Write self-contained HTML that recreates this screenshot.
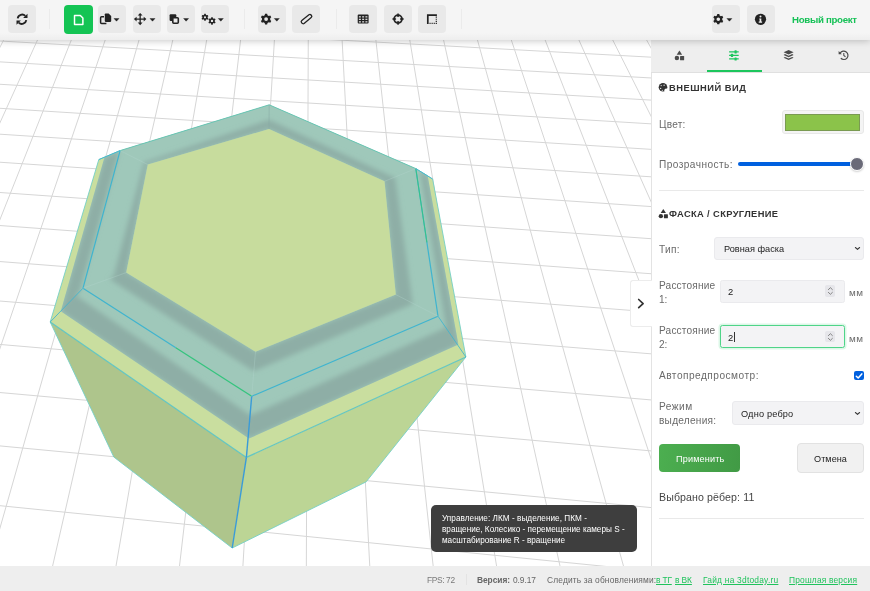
<!DOCTYPE html>
<html lang="ru"><head><meta charset="utf-8"><title>3D</title>
<style>
*{box-sizing:border-box;margin:0;padding:0}
html,body{width:870px;height:591px;overflow:hidden;background:#fff;font-family:"Liberation Sans",sans-serif;}
.abs{position:absolute}
#scene{position:absolute;left:0;top:0;width:870px;height:591px}
#hdr{position:absolute;left:0;top:0;width:870px;height:39.6px;background:linear-gradient(#f5f5f5 0,#f5f5f5 33px,#eeeeee 39.6px);box-shadow:0 1px 7px rgba(0,0,0,.22);z-index:5}
.tb{position:absolute;top:5px;width:28px;height:28px;border-radius:4px;background:#e9e9e9}
.tb.g{background:#14c454;top:4.5px;height:29px;width:28.6px}
.sep{position:absolute;top:9px;width:1px;height:20px;background:#ebebeb}
.tb svg{position:absolute;left:0;top:0;width:28px;height:28px}
.t{position:absolute;white-space:nowrap;line-height:1;will-change:transform}
#panel{position:absolute;left:651px;top:39px;width:219px;height:527px;background:#fff;border-left:1px solid #e3e3e3;z-index:3}
#tabs{position:absolute;left:651px;top:39px;width:219px;height:34px;background:#eeeeee;border-bottom:1px solid #e0e0e0;z-index:4}
#ftr{position:absolute;left:0;top:566px;width:870px;height:25px;background:#eeeeee;z-index:6}
.lbl{color:#6a6a6a;font-size:10.1px}
.hr{position:absolute;left:659px;width:205px;height:1px;background:#e9e9e9;z-index:4}
.inp{position:absolute;background:#f3f3f5;border:1px solid #eaeaed;border-radius:2.5px;z-index:4}
.z4{z-index:4}
.lnk{color:#1fc35c;text-decoration:underline}
#t_proj{letter-spacing:-0.306px}#t_tt1{letter-spacing:0.041px}#t_tt2{letter-spacing:0.001px}#t_tt3{letter-spacing:-0.023px}#t_h1{letter-spacing:0.513px}#t_cvet{letter-spacing:0.236px}#t_prozr{letter-spacing:0.447px}#t_h2{letter-spacing:0.375px}#t_tip{letter-spacing:0.340px}#t_sel1{letter-spacing:0.014px}#t_r1{letter-spacing:0.187px}#t_mm1{letter-spacing:0.608px}#t_r2{letter-spacing:0.187px}#t_mm2{letter-spacing:0.608px}#t_auto{letter-spacing:0.501px}#t_rezh{letter-spacing:0.495px}#t_vyd{letter-spacing:0.262px}#t_sel2{letter-spacing:0.176px}#t_apply{letter-spacing:0.167px}#t_cancel{letter-spacing:0.060px}#t_sel{letter-spacing:0.104px}#t_fps{letter-spacing:-0.367px}#t_ver{letter-spacing:-0.045px}#t_vnum{letter-spacing:-0.083px}#t_sled{letter-spacing:0.160px}#t_tg{letter-spacing:-0.159px}#t_vk{letter-spacing:-0.088px}#t_guide{letter-spacing:0.234px}#t_old{letter-spacing:0.190px}#t_tip{margin-top:1px}#t_r1{margin-top:1px}#t_n1{margin-top:1px}#t_mm2{margin-top:1px}#t_h1{margin-top:1px}#t_h2{margin-top:1px}#t_tt2{margin-top:1px}#t_tt3{margin-top:1px}</style></head><body>
<svg id="scene" viewBox="0 0 870 591">
<rect width="870" height="591" fill="#fff"/>
<g stroke="#d6d6d6" stroke-width="1" fill="none"><line x1="-290.9" y1="-29.0" x2="-936.5" y2="542.8"/><line x1="-262.5" y1="-27.6" x2="-881.1" y2="549.1"/><line x1="-233.9" y1="-26.1" x2="-825.0" y2="555.5"/><line x1="-205.2" y1="-24.6" x2="-768.3" y2="561.9"/><line x1="-176.3" y1="-23.1" x2="-711.0" y2="568.5"/><line x1="-147.3" y1="-21.6" x2="-653.0" y2="575.1"/><line x1="-118.1" y1="-20.1" x2="-594.3" y2="581.7"/><line x1="-88.7" y1="-18.6" x2="-534.9" y2="588.5"/><line x1="-59.2" y1="-17.1" x2="-474.9" y2="595.3"/><line x1="-29.5" y1="-15.6" x2="-414.1" y2="602.2"/><line x1="0.3" y1="-14.0" x2="-352.5" y2="609.2"/><line x1="30.4" y1="-12.5" x2="-290.3" y2="616.3"/><line x1="60.6" y1="-10.9" x2="-227.3" y2="623.5"/><line x1="90.9" y1="-9.3" x2="-163.5" y2="630.8"/><line x1="121.5" y1="-7.8" x2="-98.9" y2="638.1"/><line x1="152.2" y1="-6.2" x2="-33.5" y2="645.5"/><line x1="183.0" y1="-4.6" x2="32.7" y2="653.1"/><line x1="214.1" y1="-3.0" x2="99.7" y2="660.7"/><line x1="245.4" y1="-1.4" x2="167.6" y2="668.4"/><line x1="276.8" y1="0.2" x2="236.3" y2="676.2"/><line x1="308.4" y1="1.9" x2="305.9" y2="684.1"/><line x1="340.2" y1="3.5" x2="376.4" y2="692.2"/><line x1="372.1" y1="5.2" x2="447.8" y2="700.3"/><line x1="404.3" y1="6.8" x2="520.1" y2="708.5"/><line x1="436.6" y1="8.5" x2="593.4" y2="716.9"/><line x1="469.2" y1="10.2" x2="667.7" y2="725.3"/><line x1="501.9" y1="11.8" x2="742.9" y2="733.9"/><line x1="534.8" y1="13.5" x2="819.2" y2="742.5"/><line x1="567.9" y1="15.3" x2="896.4" y2="751.3"/><line x1="601.2" y1="17.0" x2="974.7" y2="760.2"/><line x1="634.7" y1="18.7" x2="1054.1" y2="769.3"/><line x1="668.4" y1="20.4" x2="1134.6" y2="778.4"/><line x1="702.3" y1="22.2" x2="1216.2" y2="787.7"/><line x1="736.5" y1="23.9" x2="1298.9" y2="797.1"/><line x1="770.8" y1="25.7" x2="1382.8" y2="806.6"/><line x1="805.3" y1="27.5" x2="1467.8" y2="816.3"/><line x1="840.0" y1="29.3" x2="1554.1" y2="826.1"/><line x1="875.0" y1="31.1" x2="1641.6" y2="836.1"/><line x1="910.1" y1="32.9" x2="1730.4" y2="846.2"/><line x1="945.5" y1="34.7" x2="1820.4" y2="856.4"/><line x1="981.1" y1="36.6" x2="1911.8" y2="866.8"/><line x1="1016.9" y1="38.4" x2="2004.5" y2="877.4"/><line x1="1052.9" y1="40.3" x2="2098.6" y2="888.1"/><line x1="1089.2" y1="42.1" x2="2194.1" y2="898.9"/><line x1="-366.6" y1="-16.3" x2="1229.5" y2="68.6"/><line x1="-387.2" y1="0.2" x2="1261.9" y2="90.7"/><line x1="-409.0" y1="17.8" x2="1296.6" y2="114.6"/><line x1="-432.2" y1="36.5" x2="1333.9" y2="140.2"/><line x1="-457.0" y1="56.5" x2="1374.2" y2="167.8"/><line x1="-483.5" y1="77.8" x2="1417.8" y2="197.7"/><line x1="-511.9" y1="100.7" x2="1465.2" y2="230.1"/><line x1="-542.4" y1="125.3" x2="1516.7" y2="265.5"/><line x1="-575.3" y1="151.7" x2="1573.1" y2="304.1"/><line x1="-610.8" y1="180.3" x2="1635.0" y2="346.6"/><line x1="-649.2" y1="211.3" x2="1703.2" y2="393.4"/><line x1="-691.0" y1="245.0" x2="1778.9" y2="445.3"/><line x1="-736.6" y1="281.7" x2="1863.3" y2="503.2"/><line x1="-786.6" y1="322.0" x2="1958.0" y2="568.1"/><line x1="-841.6" y1="366.2" x2="2065.0" y2="641.5"/><line x1="-902.3" y1="415.2" x2="2186.8" y2="725.0"/><line x1="-969.9" y1="469.6" x2="2326.8" y2="821.0"/><line x1="-1045.4" y1="530.4" x2="2489.4" y2="932.5"/></g>

<defs>
<clipPath id="ring"><path clip-rule="evenodd" d="M269.2,104.8 L415.8,168.6 L427.6,175.6 L458.4,344.6 L248.9,438.6 L60.8,311.2 L104.5,157.2 L120.1,150.6Z M269.0,129.0 L384.5,181.3 L395.8,294.6 L255.5,351.7 L126.2,272.6 L147.8,164.6Z"/></clipPath>
<filter id="bl" x="-5%" y="-5%" width="110%" height="110%"><feGaussianBlur stdDeviation="2.4"/></filter>
</defs>
<!-- walls -->
<polygon fill="#aec58c" points="50.2,322.0 246.4,457.4 232.2,548.0 113.8,457.0"/>
<polygon fill="#bcd595" points="246.4,457.4 465.9,357.0 366.2,481.8 232.2,548.0"/>
<!-- outer band -->
<polygon fill="#c9de9f" points="269.2,104.8 415.8,168.6 432.6,179.0 465.9,357.0 246.4,457.4 50.2,322.0 98.8,159.6 120.1,150.6"/>
<polygon fill="#9fc8ba" points="269.2,104.8 415.8,168.6 427.6,175.6 458.4,344.6 248.9,438.6 60.8,311.2 104.5,157.2 120.1,150.6"/>
<g clip-path="url(#ring)"><g fill="#8eaea6" filter="url(#bl)"><polygon points="147.8,164.6 269.0,129.0 269.1,119.8 143.4,162.4"/><polygon points="269.0,129.0 384.5,181.3 393.9,177.5 269.1,119.8"/><polygon points="384.5,181.3 395.8,294.6 412.7,303.2 395.1,177.0"/><polygon points="419.9,171.0 446.2,327.6 458.4,344.6 427.6,175.6"/><polygon points="395.8,294.6 255.5,351.7 253.8,371.3 413.5,303.7"/><polygon points="446.2,327.6 250.4,415.3 248.9,438.6 458.4,344.6"/><polygon points="255.5,351.7 126.2,272.6 108.9,278.8 253.8,371.3"/><polygon points="250.4,415.3 75.9,295.6 60.8,311.2 248.9,438.6"/><polygon points="126.2,272.6 147.8,164.6 143.9,162.6 113.2,277.3"/><polygon points="79.7,291.6 119.3,150.9 104.5,157.2 60.8,311.2"/></g></g>
<polygon fill="#c7dc9d" points="269.0,129.0 384.5,181.3 395.8,294.6 255.5,351.7 126.2,272.6 147.8,164.6"/>
<line x1="120.1" y1="150.6" x2="269.2" y2="104.8" stroke="#5fc3b4" stroke-width="1" stroke-opacity="0.9"/><line x1="269.2" y1="104.8" x2="415.8" y2="168.6" stroke="#5fc3b4" stroke-width="1" stroke-opacity="0.9"/><line x1="98.8" y1="159.6" x2="120.1" y2="150.6" stroke="#74cfc6" stroke-width="1" stroke-opacity="0.9"/><line x1="432.6" y1="179.0" x2="415.8" y2="168.6" stroke="#74cfc6" stroke-width="1" stroke-opacity="0.9"/><line x1="432.6" y1="179.0" x2="465.9" y2="357.0" stroke="#74cfc6" stroke-width="1" stroke-opacity="0.9"/><line x1="98.8" y1="159.6" x2="50.2" y2="322.0" stroke="#74cfc6" stroke-width="1" stroke-opacity="0.9"/><line x1="50.2" y1="322.0" x2="113.8" y2="457.0" stroke="#74cfc6" stroke-width="1" stroke-opacity="0.9"/><line x1="113.8" y1="457.0" x2="232.2" y2="548.0" stroke="#74cfc6" stroke-width="1" stroke-opacity="0.9"/><line x1="232.2" y1="548.0" x2="366.2" y2="481.8" stroke="#74cfc6" stroke-width="1" stroke-opacity="0.9"/><line x1="366.2" y1="481.8" x2="465.9" y2="357.0" stroke="#74cfc6" stroke-width="1" stroke-opacity="0.9"/><line x1="50.2" y1="322.0" x2="246.4" y2="457.4" stroke="#5cc4c4" stroke-width="1.25" stroke-opacity="0.95"/><line x1="246.4" y1="457.4" x2="465.9" y2="357.0" stroke="#5cc4c4" stroke-width="1.25" stroke-opacity="0.95"/><line x1="415.8" y1="168.6" x2="438.0" y2="316.2" stroke="#3fb4cf" stroke-width="1.2" stroke-opacity="1"/><line x1="438.0" y1="316.2" x2="251.7" y2="396.3" stroke="#3fb4cf" stroke-width="1.2" stroke-opacity="1"/><line x1="83.0" y1="288.2" x2="120.1" y2="150.6" stroke="#3fb4cf" stroke-width="1.2" stroke-opacity="1"/><line x1="83.0" y1="288.2" x2="175.8" y2="347.7" stroke="#3fb4cf" stroke-width="1.2" stroke-opacity="1"/><line x1="175.8" y1="347.7" x2="251.7" y2="396.3" stroke="#35c47e" stroke-width="1.3" stroke-opacity="1"/><line x1="415.8" y1="168.6" x2="426.9" y2="242.4" stroke="#35c47e" stroke-width="1" stroke-opacity="0.9"/><line x1="83.0" y1="288.2" x2="50.2" y2="322.0" stroke="#3fb4cf" stroke-width="1" stroke-opacity="0.85"/><line x1="438.0" y1="316.2" x2="465.9" y2="357.0" stroke="#3fb4cf" stroke-width="1" stroke-opacity="0.85"/><line x1="415.8" y1="168.6" x2="432.6" y2="179.0" stroke="#3fb4cf" stroke-width="1" stroke-opacity="0.85"/><line x1="120.1" y1="150.6" x2="98.8" y2="159.6" stroke="#3fb4cf" stroke-width="1" stroke-opacity="0.85"/><line x1="251.7" y1="396.3" x2="246.4" y2="457.4" stroke="#3a9bd8" stroke-width="1.4" stroke-opacity="1"/><line x1="246.4" y1="457.4" x2="232.2" y2="548.0" stroke="#3a9bd8" stroke-width="1.4" stroke-opacity="1"/><line x1="384.5" y1="181.3" x2="415.8" y2="168.6" stroke="#b5d8d0" stroke-width="1" stroke-opacity="0.3"/><line x1="395.8" y1="294.6" x2="438.0" y2="316.2" stroke="#b5d8d0" stroke-width="1" stroke-opacity="0.3"/><line x1="255.5" y1="351.7" x2="251.7" y2="396.3" stroke="#b5d8d0" stroke-width="1" stroke-opacity="0.3"/><line x1="126.2" y1="272.6" x2="83.0" y2="288.2" stroke="#b5d8d0" stroke-width="1" stroke-opacity="0.3"/><line x1="147.8" y1="164.6" x2="120.1" y2="150.6" stroke="#b5d8d0" stroke-width="1" stroke-opacity="0.3"/><line x1="269.0" y1="129.0" x2="269.2" y2="104.8" stroke="#86a8a4" stroke-width="1" stroke-opacity="0.5"/>
</svg>

<!-- header -->
<div id="hdr">
<div class="tb" style="left:7.5px"><svg viewBox="0 0 28 28"><g fill="none" stroke="#222" stroke-width="1.9"><path d="M9.7 13.4 A4.5 4.5 0 0 1 17.3 10.9"/><path d="M18.3 15.1 A4.5 4.5 0 0 1 10.7 17.6"/></g><path d="M19.5 8.7 V13.1 H15.1z M8.5 19.8 V15.4 H12.9z" fill="#222"/></svg></div><div class="sep" style="left:49px"></div><div class="tb g" style="left:64px"><svg viewBox="0 0 28 28" style="width:28.6px;height:29px"><path d="M10.3 10.1 H16 L18.5 12.6 V18.8 H10.3z" fill="none" stroke="#fff" stroke-width="1.45" stroke-linejoin="round"/></svg></div><div class="tb" style="left:98.3px"><svg viewBox="0 0 28 28"><path d="M6 11.8 H3.6 a1 1 0 0 0 -1 1 V17.4 a1 1 0 0 0 1 1 H8.4" fill="none" stroke="#222" stroke-width="1.5"/><path d="M6.8 9.3 a0.8 0.8 0 0 1 0.8 -0.8 h3 l2.6 2.6 v5 a0.8 0.8 0 0 1 -0.8 0.8 h-4.8 a0.8 0.8 0 0 1 -0.8 -0.8z" fill="#222"/><path d="M16 13.5 h5 l-2.5 2.7z" fill="#222" stroke="#222" stroke-width="0.4" stroke-linejoin="round"/></svg></div><div class="tb" style="left:132.7px"><svg viewBox="0 0 28 28"><path d="M7.15 9.6 V18.6 M2.6 14.05 H11.7" stroke="#222" stroke-width="1.3" fill="none"/><path d="M7.15 7.9 l2.4 2.7 h-4.8z M7.15 20.2 l2.4 -2.7 h-4.8z M0.9 14.05 l2.7 -2.4 v4.8z M13.4 14.05 l-2.7 -2.4 v4.8z" fill="#222"/><path d="M17 13.5 h5 l-2.5 2.7z" fill="#222" stroke="#222" stroke-width="0.4" stroke-linejoin="round"/></svg></div><div class="tb" style="left:167px"><svg viewBox="0 0 28 28"><rect x="2.6" y="9.3" width="6.7" height="6.6" rx="1" fill="#222"/><rect x="5.8" y="12.7" width="5.5" height="5.5" rx="0.9" fill="#e9e9e9" stroke="#222" stroke-width="1.6"/><path d="M16.6 13.5 h5 l-2.5 2.7z" fill="#222" stroke="#222" stroke-width="0.4" stroke-linejoin="round"/></svg></div><div class="tb" style="left:201.2px"><svg viewBox="0 0 28 28"><path fill-rule="evenodd" fill="#222" d="M4.89 14.85 L4.70 15.83 L3.30 15.83 L3.11 14.85 L2.24 14.35 L1.29 14.67 L0.59 13.46 L1.35 12.80 L1.35 11.80 L0.59 11.14 L1.29 9.93 L2.24 10.25 L3.11 9.75 L3.30 8.77 L4.70 8.77 L4.89 9.75 L5.76 10.25 L6.71 9.93 L7.41 11.14 L6.65 11.80 L6.65 12.80 L7.41 13.46 L6.71 14.67 L5.76 14.35Z M2.90 12.30 a1.10 1.10 0 1 0 2.20 0 a1.10 1.10 0 1 0 -2.20 0Z"/><path fill-rule="evenodd" fill="#222" d="M11.93 18.54 L11.74 19.63 L10.26 19.63 L10.07 18.54 L9.18 18.02 L8.14 18.40 L7.40 17.13 L8.25 16.42 L8.25 15.38 L7.40 14.67 L8.14 13.40 L9.18 13.78 L10.07 13.26 L10.26 12.17 L11.74 12.17 L11.93 13.26 L12.82 13.78 L13.86 13.40 L14.60 14.67 L13.75 15.38 L13.75 16.42 L14.60 17.13 L13.86 18.40 L12.82 18.02Z M9.80 15.90 a1.20 1.20 0 1 0 2.40 0 a1.20 1.20 0 1 0 -2.40 0Z"/><path d="M17.3 13.5 h5 l-2.5 2.7z" fill="#222" stroke="#222" stroke-width="0.4" stroke-linejoin="round"/></svg></div><div class="sep" style="left:243.5px"></div><div class="tb" style="left:257.8px"><svg viewBox="0 0 28 28"><path fill-rule="evenodd" fill="#222" d="M9.49 18.06 L9.16 19.50 L7.04 19.50 L6.71 18.06 L5.36 17.29 L3.96 17.72 L2.89 15.88 L3.97 14.88 L3.97 13.32 L2.89 12.32 L3.96 10.48 L5.36 10.91 L6.71 10.14 L7.04 8.70 L9.16 8.70 L9.49 10.14 L10.84 10.91 L12.24 10.48 L13.31 12.32 L12.23 13.32 L12.23 14.88 L13.31 15.88 L12.24 17.72 L10.84 17.29Z M6.20 14.10 a1.90 1.90 0 1 0 3.80 0 a1.90 1.90 0 1 0 -3.80 0Z"/><path d="M16.3 13.5 h5 l-2.5 2.7z" fill="#222" stroke="#222" stroke-width="0.4" stroke-linejoin="round"/></svg></div><div class="tb" style="left:292.4px"><svg viewBox="0 0 28 28"><g transform="rotate(-39 14.5 14.1)"><rect x="8.4" y="12.3" width="12.2" height="3.6" rx="1.5" fill="none" stroke="#222" stroke-width="1.3"/></g></svg></div><div class="sep" style="left:335.5px"></div><div class="tb" style="left:349.3px"><svg viewBox="0 0 28 28"><rect x="8.7" y="9.6" width="10.9" height="9" rx="1" fill="#222"/><rect x="9.9" y="11.2" width="2" height="1.3" fill="#d8d8d8"/><rect x="13.15" y="11.2" width="2" height="1.3" fill="#d8d8d8"/><rect x="16.4" y="11.2" width="2" height="1.3" fill="#d8d8d8"/><rect x="9.9" y="13.7" width="2" height="1.3" fill="#d8d8d8"/><rect x="13.15" y="13.7" width="2" height="1.3" fill="#d8d8d8"/><rect x="16.4" y="13.7" width="2" height="1.3" fill="#d8d8d8"/><rect x="9.9" y="16.2" width="2" height="1.3" fill="#d8d8d8"/><rect x="13.15" y="16.2" width="2" height="1.3" fill="#d8d8d8"/><rect x="16.4" y="16.2" width="2" height="1.3" fill="#d8d8d8"/></svg></div><div class="tb" style="left:383.8px"><svg viewBox="0 0 28 28"><circle cx="14.05" cy="14.1" r="3.95" fill="none" stroke="#222" stroke-width="1.8"/><path d="M14.05 8.5 V12.1 M14.05 16.1 V19.7 M8.45 14.1 H12.05 M16.05 14.1 H19.65" stroke="#222" stroke-width="1.5"/></svg></div><div class="tb" style="left:418.4px"><svg viewBox="0 0 28 28"><path d="M9.8 18.9 V10.1 H18.9" fill="none" stroke="#222" stroke-width="1.7"/><path d="M18.3 11.6 V18.9 M18.9 18.3 H10.8" fill="none" stroke="#222" stroke-width="1.2" stroke-dasharray="1.1 1"/></svg></div><div class="sep" style="left:460.5px"></div><div class="tb" style="left:712.2px"><svg viewBox="0 0 28 28"><path fill-rule="evenodd" fill="#222" d="M7.62 17.97 L7.32 19.35 L5.28 19.35 L4.98 17.97 L3.69 17.23 L2.35 17.66 L1.33 15.90 L2.37 14.94 L2.37 13.46 L1.33 12.50 L2.35 10.74 L3.69 11.17 L4.98 10.43 L5.28 9.05 L7.32 9.05 L7.62 10.43 L8.91 11.17 L10.25 10.74 L11.27 12.50 L10.23 13.46 L10.23 14.94 L11.27 15.90 L10.25 17.66 L8.91 17.23Z M4.50 14.20 a1.80 1.80 0 1 0 3.60 0 a1.80 1.80 0 1 0 -3.60 0Z"/><path d="M14.9 13.5 h5 l-2.5 2.7z" fill="#222" stroke="#222" stroke-width="0.4" stroke-linejoin="round"/></svg></div><div class="tb" style="left:746.6px"><svg viewBox="0 0 28 28"><circle cx="13.5" cy="14.3" r="5.6" fill="#222"/><circle cx="13.5" cy="11.6" r="1" fill="#f0f0f0"/><path d="M12.3 13.4 h2 v3.2 h0.8 v1.1 h-3.4 v-1.1 h0.9 v-2.1 h-0.3z" fill="#f0f0f0"/></svg></div>
<span class="t" id="t_proj" style="left:791.5px;top:14.5px;font-size:9.7px;font-weight:bold;color:#16c157">Новый проект</span>
</div>

<!-- collapse -->
<div class="abs" style="left:630px;top:279.5px;width:22px;height:47px;background:#fff;border:1px solid #ececec;border-right:none;border-radius:3px 0 0 3px;z-index:4">
<svg width="22" height="47" viewBox="0 0 22 47" style="position:absolute;left:-1px;top:-1px"><path d="M8.7 19.5 L13.1 23.6 L8.7 27.7" fill="none" stroke="#333" stroke-width="1.7" stroke-linecap="round" stroke-linejoin="round"/></svg>
</div>

<!-- tooltip -->
<div class="abs" style="left:431.3px;top:505.2px;width:206px;height:46.5px;background:#3e3e3e;border-radius:5px;z-index:4"></div>
<span class="t z4" id="t_tt1" style="left:441.8px;top:514.75px;font-size:8.2px;color:#fff">Управление: ЛКМ - выделение, ПКМ -</span>
<span class="t z4" id="t_tt2" style="left:441.8px;top:525.35px;font-size:8.2px;color:#fff">вращение, Колесико - перемещение камеры S -</span>
<span class="t z4" id="t_tt3" style="left:441.8px;top:536.15px;font-size:8.2px;color:#fff">масштабирование R - вращение</span>

<!-- panel -->
<div id="panel"></div>
<div id="tabs">
<svg class="abs" style="left:0;top:0" width="219" height="34" viewBox="0 0 219 34"><g transform="translate(28.4 16.4) scale(0.93)" fill="#4a4a4a"><path d="M0 -5.2 L2.9 -0.6 H-2.9z"/><circle cx="-2.7" cy="2.9" r="2.4"/><rect x="0.7" y="0.6" width="4.4" height="4.6" rx="0.6"/></g><g stroke="#1dc65d" stroke-width="1.2" fill="none"><path d="M78.10000000000001 12.899999999999999 H87.7 M78.10000000000001 16.4 H87.7 M78.10000000000001 19.9 H87.7"/></g><g fill="#1dc65d"><rect x="83.5" y="11.2" width="2.2" height="3.2" rx="0.5"/><rect x="79.9" y="14.799999999999999" width="2.2" height="3.2" rx="0.5"/><rect x="83.5" y="18.4" width="2.2" height="3.2" rx="0.5"/></g><g fill="#4a4a4a"><path d="M137.6 11.100000000000001 l5 2.2 l-5 2.2 l-5 -2.2z"/><path d="M132.6 16.0 l1.4 -0.9 l3.6 1.6 l3.6 -1.6 l1.4 0.9 l-5 2.3z"/><path d="M132.6 18.8 l1.4 -0.9 l3.6 1.6 l3.6 -1.6 l1.4 0.9 l-5 2.3z"/></g><g fill="none" stroke="#4a4a4a" stroke-width="1.2"><path d="M189.20000000000002 14.100000000000001 A4.2 4.2 0 1 1 189.8 19.3"/><path d="M192.8 13.9 V16.5 L194.5 17.7" stroke-width="1.05"/></g><path d="M187.60000000000002 11.9 V15.200000000000001 H190.9z" fill="#4a4a4a"/></svg>
<div class="abs" style="left:55.8px;top:30.6px;width:54.8px;height:2.8px;background:#1dc65d"></div>
</div>

<svg class="abs z4" style="left:651px;top:39px;pointer-events:none" width="219" height="527" viewBox="651 39 219 527"><circle cx="663" cy="87.3" r="4.3" fill="#333"/><circle cx="661.2" cy="85.6" r="0.7" fill="#ddd"/><circle cx="664.1" cy="85.2" r="0.7" fill="#ddd"/><circle cx="660.6" cy="88.4" r="0.7" fill="#ddd"/><circle cx="662.3" cy="90.3" r="0.6" fill="#ddd"/><circle cx="666.3" cy="90.4" r="2" fill="#fff"/><g transform="translate(663.3 213.6) scale(0.9)" fill="#333"><path d="M0 -5.2 L2.9 -0.6 H-2.9z"/><circle cx="-2.7" cy="2.9" r="2.4"/><rect x="0.7" y="0.6" width="4.4" height="4.6" rx="0.6"/></g></svg>
<span class="t z4" id="t_h1" style="left:669.2px;top:83.4px;font-size:9.3px;font-weight:bold;color:#333">ВНЕШНИЙ ВИД</span>
<span class="t z4 lbl" id="t_cvet" style="left:658.8px;top:119.50px">Цвет:</span>
<div class="abs z4" style="left:781.8px;top:110.2px;width:81.8px;height:24.3px;background:#f4f4f4;border:1px solid #e8e8e8;border-radius:3px"></div>
<div class="abs z4" style="left:785.2px;top:113.9px;width:75px;height:17.5px;background:#8bc34a;border:1px solid rgba(110,120,90,.55)"></div>
<span class="t z4 lbl" id="t_prozr" style="left:658.8px;top:159.70px">Прозрачность:</span>
<div class="abs z4" style="left:738px;top:161.8px;width:122px;height:4.1px;border-radius:2px;background:#0060df"></div>
<div class="abs z4" style="left:849.7px;top:156.5px;width:14.2px;height:14.2px;border-radius:50%;background:#6a6a78;border:1.8px solid #fff;box-shadow:0 1px 2px rgba(0,0,0,.18)"></div>
<div class="hr" style="top:189.5px"></div>

<span class="t z4" id="t_h2" style="left:669px;top:209.4px;font-size:9.3px;font-weight:bold;color:#333">ФАСКА / СКРУГЛЕНИЕ</span>
<span class="t z4 lbl" id="t_tip" style="left:658.8px;top:244.20px">Тип:</span>
<div class="inp" style="left:714px;top:236.6px;width:150px;height:23.8px;border-radius:3px"></div>
<span class="t z4" id="t_sel1" style="left:723.6px;top:244.66px;font-size:9.2px;color:#1c1c1c">Ровная фаска</span>
<svg class="abs z4" style="left:853px;top:244px" width="9" height="9" viewBox="0 0 9 9"><path d="M2.4 3.5 L4.5 5.4 L6.6 3.5" fill="none" stroke="#3a3a3a" stroke-width="1.1" stroke-linecap="round" stroke-linejoin="round"/></svg>

<span class="t z4 lbl" id="t_r1" style="left:658.8px;top:280.30px">Расстояние</span>
<span class="t z4 lbl" id="t_n1" style="left:658.8px;top:294.25px">1:</span>
<div class="inp" style="left:720px;top:279.6px;width:125px;height:23px"></div>
<span class="t z4" id="t_v1" style="left:728.3px;top:287.34px;font-size:9.4px;color:#1a1a1a">2</span>
<div class="abs z4" style="left:824.5px;top:285.2px;width:10.8px;height:11.6px;border-radius:2px;background:#e6e6ea"></div><svg class="abs z4" style="left:824.5px;top:285.2px" width="11" height="12" viewBox="0 0 11 12"><path d="M3.4 4.6 L5.4 2.7 L7.4 4.6 M3.4 7.4 L5.4 9.3 L7.4 7.4" fill="none" stroke="#777" stroke-width="0.9" stroke-linecap="round" stroke-linejoin="round"/></svg>
<span class="t z4 lbl" id="t_mm1" style="left:849px;top:287.90px;font-size:9.8px">мм</span>

<span class="t z4 lbl" id="t_r2" style="left:658.8px;top:325.80px">Расстояние</span>
<span class="t z4 lbl" id="t_n2" style="left:658.8px;top:339.75px">2:</span>
<div class="inp" style="left:720px;top:325px;width:125px;height:23px;border-color:#4fd488;box-shadow:0 0 0 1.5px rgba(60,210,120,.18)"></div>
<span class="t z4" id="t_v2" style="left:728.3px;top:332.94px;font-size:9.4px;color:#1a1a1a">2</span>
<div class="abs z4" style="left:733.6px;top:331.6px;width:1px;height:10.6px;background:#333"></div>
<div class="abs z4" style="left:824.5px;top:330.8px;width:10.8px;height:11.6px;border-radius:2px;background:#e6e6ea"></div><svg class="abs z4" style="left:824.5px;top:330.8px" width="11" height="12" viewBox="0 0 11 12"><path d="M3.4 4.6 L5.4 2.7 L7.4 4.6 M3.4 7.4 L5.4 9.3 L7.4 7.4" fill="none" stroke="#777" stroke-width="0.9" stroke-linecap="round" stroke-linejoin="round"/></svg>
<span class="t z4 lbl" id="t_mm2" style="left:849px;top:333.40px;font-size:9.8px">мм</span>

<span class="t z4 lbl" id="t_auto" style="left:658.8px;top:370.80px">Автопредпросмотр:</span>
<div class="abs z4" style="left:854px;top:370.6px;width:9.8px;height:9.8px;border-radius:2px;background:#0060df"></div>
<svg class="abs z4" style="left:854px;top:370.6px" width="10" height="10" viewBox="0 0 10 10"><path d="M2.3 5.2 L4.2 7 L7.8 2.9" fill="none" stroke="#fff" stroke-width="1.5" stroke-linecap="round" stroke-linejoin="round"/></svg>

<span class="t z4 lbl" id="t_rezh" style="left:658.8px;top:401.75px">Режим</span>
<span class="t z4 lbl" id="t_vyd" style="left:658.8px;top:415.70px">выделения:</span>
<div class="inp" style="left:732.2px;top:401.2px;width:131.8px;height:23.5px;border-radius:3px"></div>
<span class="t z4" id="t_sel2" style="left:741.2px;top:409.76px;font-size:9.2px;color:#1c1c1c">Одно ребро</span>
<svg class="abs z4" style="left:853px;top:408.5px" width="9" height="9" viewBox="0 0 9 9"><path d="M2.4 3.5 L4.5 5.4 L6.6 3.5" fill="none" stroke="#3a3a3a" stroke-width="1.1" stroke-linecap="round" stroke-linejoin="round"/></svg>

<div class="abs z4" style="left:658.8px;top:444.3px;width:81.6px;height:28px;border-radius:4px;background:linear-gradient(100deg,#4caf50,#419a45)"></div>
<span class="t z4" id="t_apply" style="left:675.6px;top:454.55px;font-size:9.1px;color:#fff">Применить</span>
<div class="abs z4" style="left:796.6px;top:443.4px;width:67.2px;height:29.2px;border-radius:4px;background:#f1f1f1;border:1px solid #e2e2e2"></div>
<span class="t z4" id="t_cancel" style="left:813.8px;top:454.55px;font-size:9.1px;color:#222">Отмена</span>
<span class="t z4" id="t_sel" style="left:659px;top:492.33px;font-size:10.6px;color:#444">Выбрано рёбер: 11</span>
<div class="hr" style="top:517.6px"></div>

<!-- footer -->
<div id="ftr">
<span class="t" id="t_fps" style="left:426.7px;top:10.3px;font-size:8.4px;color:#7a7a7a">FPS: 72</span>
<div class="abs" style="left:466px;top:8px;width:1px;height:11px;background:#e3e3e3"></div>
<span class="t" id="t_ver" style="left:477.4px;top:10.3px;font-size:8.4px;color:#666;font-weight:bold">Версия:</span>
<span class="t" id="t_vnum" style="left:512.8px;top:10.3px;font-size:8.4px;color:#666">0.9.17</span>
<span class="t" id="t_sled" style="left:546.7px;top:10.3px;font-size:8.4px;color:#666">Следить за обновлениями:</span>
<span class="t lnk" id="t_tg" style="left:656.4px;top:10.3px;font-size:8.4px">в ТГ</span>
<span class="t lnk" id="t_vk" style="left:675.2px;top:10.3px;font-size:8.4px">в ВК</span>
<span class="t lnk" id="t_guide" style="left:702.6px;top:10.3px;font-size:8.4px">Гайд на 3dtoday.ru</span>
<span class="t lnk" id="t_old" style="left:788.6px;top:10.3px;font-size:8.4px">Прошлая версия</span>
</div>
</body></html>
